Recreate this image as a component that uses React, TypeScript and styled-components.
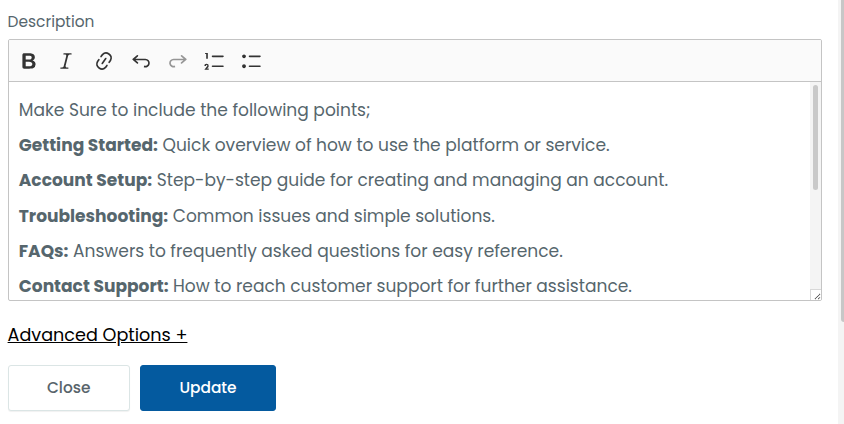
import React from 'react';
import styled, { createGlobalStyle } from 'styled-components';

const GlobalStyle = createGlobalStyle`
  *, *::before, *::after { box-sizing: border-box; }
  html, body { margin: 0; height: 100%; overflow: hidden; background: #fff; }
  #root { height: 100%; }
  body {
    font-family: Poppins, Inter, sans-serif;
    font-size: 17.6px;
    line-height: 26.4px;
    color: #56666d;
  }
`;

const Page = styled.div`
  display: flex;
  height: 424px;
  overflow: hidden;
`;

const Form = styled.main`
  flex: 1;
  display: flex;
  flex-direction: column;
  align-items: flex-start;
  padding: 9px 16px 0 7.6px;
`;

const PageScrollbar = styled.div`
  width: 6px;
  padding-left: 3px;
  background: #f4f4f4;
`;

const PageThumb = styled.div`
  height: 322px;
  background: #c7c7c7;
  border-bottom-left-radius: 3px;
`;

const Label = styled.label`
  height: 30px;
  font-size: 15.4px;
  line-height: 25px;
`;

const Editor = styled.section`
  width: 814px;
  height: 262px;
  margin-left: 0.4px;
  display: flex;
  flex-direction: column;
  border: 1px solid #c4c4c4;
  border-radius: 2px;
  overflow: hidden;
`;

const Toolbar = styled.div`
  display: flex;
  align-items: center;
  gap: 7.2px;
  height: 42px;
  flex: none;
  padding: 1px 5px 0 5.15px;
  background: #fafafa;
  border-bottom: 1px solid #c4c4c4;
`;

const ToolButton = styled.button`
  display: flex;
  align-items: center;
  justify-content: center;
  width: 30px;
  height: 32px;
  padding: 0;
  border: 0;
  background: none;
  color: #333;

  &:disabled { opacity: 0.5; }
`;

const Glyph = styled.svg<{ $mirrored?: boolean }>`
  width: 22px;
  height: 22px;
  flex: none;
  fill: currentColor;
  transform: ${p => (p.$mirrored ? 'scaleX(-1)' : 'none')};
`;

const EditorBody = styled.div`
  flex: 1;
  min-height: 0;
  display: flex;
`;

const Content = styled.div`
  flex: 1;
  padding: 15px 0 0 9.8px;
  font-size: 17.065px;
  overflow: hidden;
`;

const Line = styled.p`
  margin: 0 0 8.8px;
  white-space: nowrap;

  strong { font-weight: 700; }
`;

const ScrollColumn = styled.div`
  width: 11px;
  display: flex;
  flex-direction: column;
  align-items: center;
  padding-top: 3px;
  background: #f4f4f4;
`;

const ScrollThumb = styled.div`
  width: 5px;
  height: 105px;
  border-radius: 3px;
  background: #c9c9c9;
`;

const ResizeCorner = styled.div`
  width: 11px;
  height: 11px;
  margin-top: auto;
  border: solid #d8d8d8;
  border-width: 1px 0 0 1px;
  background: #fff;

  svg { display: block; width: 10px; height: 10px; }
`;

const AdvancedLink = styled.a`
  margin-top: 21px;
  color: #000;
  text-decoration: underline;
`;

const Actions = styled.div`
  display: flex;
  gap: 10px;
  margin: 16.6px 0 0 0.4px;
`;

const ActionButton = styled.button<{ $primary?: boolean }>`
  width: ${p => (p.$primary ? 136 : 122)}px;
  height: 46px;
  padding: ${p => (p.$primary ? '0 0 1px' : '0 0.6px 1px 0')};
  border: 1px solid ${p => (p.$primary ? '#045a9f' : '#dbe5e5')};
  border-radius: 3px;
  background: ${p => (p.$primary ? '#045a9f' : '#fff')};
  color: ${p => (p.$primary ? '#fff' : '#58646b')};
  box-shadow: ${p => (p.$primary ? 'none' : '0 1px 1px rgba(0, 0, 0, 0.06)')};
  font: 500 15.4px/24px Poppins, Inter, sans-serif;
`;

const UNDO =
  'm5.042 9.367 2.189 1.837a.75.75 0 0 1-.965 1.149l-3.788-3.18a.747.747 0 0 1-.21-.284.75.75 0 0 1 .17-.945L6.23 4.762a.75.75 0 1 1 .964 1.15L4.863 7.866h8.917A.75.75 0 0 1 14 7.9a4 4 0 1 1-1.477 7.718l.344-1.489a2.5 2.5 0 1 0 1.094-4.73l.008-.032H5.042z';

const tools = [
  {
    name: 'Bold',
    path: 'M10.187 17H5.773c-.637 0-1.092-.138-1.364-.415-.273-.277-.409-.718-.409-1.323V4.738c0-.617.14-1.062.419-1.332.279-.27.73-.406 1.354-.406h4.68c.69 0 1.288.041 1.793.124.506.083.96.242 1.36.478.341.197.644.447.906.75a3.262 3.262 0 0 1 .808 2.162c0 1.401-.722 2.426-2.167 3.075C15.05 10.175 16 11.315 16 13.01a3.756 3.756 0 0 1-2.296 3.504 6.1 6.1 0 0 1-1.517.377c-.571.073-1.238.11-2 .11zm-.217-6.217H7v4.087h3.069c1.977 0 2.965-.69 2.965-2.072 0-.707-.256-1.22-.768-1.537-.512-.319-1.277-.478-2.296-.478zM7 5.13v3.619h2.606c.729 0 1.292-.067 1.69-.2a1.6 1.6 0 0 0 .91-.765c.165-.267.247-.566.247-.897 0-.707-.26-1.176-.778-1.409-.519-.232-1.31-.348-2.375-.348H7z',
  },
  {
    name: 'Italic',
    path: 'm9.586 14.633.021.004c-.036.335.095.655.393.962.082.083.173.15.274.201h1.474a.6.6 0 1 1 0 1.2H5.304a.6.6 0 0 1 0-1.2h1.15c.474-.07.809-.182 1.005-.334.157-.122.291-.32.404-.597l2.416-9.55a1.053 1.053 0 0 0-.281-.823 1.12 1.12 0 0 0-.442-.296H8.15a.6.6 0 0 1 0-1.2h6.443a.6.6 0 1 1 0 1.2h-1.195c-.376.056-.65.155-.823.296-.215.175-.423.439-.623.79l-2.366 9.347z',
  },
  {
    name: 'Link',
    path: 'm11.077 15 .991-1.416a.75.75 0 1 1 1.229.86l-1.148 1.64a.748.748 0 0 1-.217.206 5.251 5.251 0 0 1-8.503-5.955.741.741 0 0 1 .12-.274l1.147-1.639a.75.75 0 1 1 1.228.86L4.933 10.7l.006.003a3.75 3.75 0 0 0 6.132 4.294l.006.004zm5.494-5.335a.748.748 0 0 1-.12.274l-1.147 1.639a.75.75 0 1 1-1.228-.86l.86-1.23a3.75 3.75 0 0 0-6.144-4.301l-.86 1.229a.75.75 0 0 1-1.229-.86l1.148-1.64a.748.748 0 0 1 .217-.206 5.251 5.251 0 0 1 8.503 5.955zm-4.563-2.532a.75.75 0 0 1 .184 1.045l-3.155 4.505a.75.75 0 1 1-1.229-.86l3.155-4.506a.75.75 0 0 1 1.045-.184z',
  },
  { name: 'Undo', path: UNDO },
  { name: 'Redo', path: UNDO, mirrored: true, disabled: true },
  {
    name: 'Numbered List',
    path: 'M7 5.75c0 .414.336.75.75.75h9.5a.75.75 0 1 0 0-1.5h-9.5a.75.75 0 0 0-.75.75zM3.5 3v5H2V3.7H1v-1h2.5V3zM.343 17.857l2.59-3.257H2.92a.6.6 0 1 0-1.04 0H.302a2 2 0 1 1 3.995 0h-.001c-.048.405-.16.734-.333.988-.175.254-.59.692-1.244 1.312H4.3v1h-4l.043-.043zM7 14.75a.75.75 0 0 1 .75-.75h9.5a.75.75 0 1 1 0 1.5h-9.5a.75.75 0 0 1-.75-.75z',
  },
  {
    name: 'Bulleted List',
    path: 'M7 5.75c0 .414.336.75.75.75h9.5a.75.75 0 1 0 0-1.5h-9.5a.75.75 0 0 0-.75.75zm-6 0C1 4.784 1.777 4 2.75 4c.966 0 1.75.777 1.75 1.75 0 .966-.777 1.75-1.75 1.75C1.784 7.5 1 6.723 1 5.75zm6 9c0 .414.336.75.75.75h9.5a.75.75 0 1 0 0-1.5h-9.5a.75.75 0 0 0-.75.75zm-6 0c0-.966.777-1.75 1.75-1.75.966 0 1.75.777 1.75 1.75 0 .966-.777 1.75-1.75 1.75-.966 0-1.75-.777-1.75-1.75z',
  },
];

const points = [
  { lead: 'Getting Started:', copy: 'Quick overview of how to use the platform or service.' },
  { lead: 'Account Setup:', copy: 'Step-by-step guide for creating and managing an account.' },
  { lead: 'Troubleshooting:', copy: 'Common issues and simple solutions.' },
  { lead: 'FAQs:', copy: 'Answers to frequently asked questions for easy reference.' },
  { lead: 'Contact Support:', copy: 'How to reach customer support for further assistance.' },
];

export default function App() {
  return (
    <>
      <GlobalStyle />
      <Page>
        <Form>
          <Label>Description</Label>
          <Editor>
            <Toolbar>
              {tools.map(tool => (
                <ToolButton key={tool.name} aria-label={tool.name} disabled={tool.disabled}>
                  <Glyph viewBox="0 0 20 20" $mirrored={tool.mirrored}>
                    <path d={tool.path} />
                  </Glyph>
                </ToolButton>
              ))}
            </Toolbar>
            <EditorBody>
              <Content>
                <Line>Make Sure to include the following points;</Line>
                {points.map(p => (
                  <Line key={p.lead}>
                    <strong>{p.lead}</strong> {p.copy}
                  </Line>
                ))}
              </Content>
              <ScrollColumn>
                <ScrollThumb />
                <ResizeCorner>
                  <svg viewBox="0 0 10 10" stroke="#555" strokeWidth="1.1" strokeDasharray="1.1 0.4">
                    <path d="M4 9 9 4M7.3 9 9 7.3" />
                  </svg>
                </ResizeCorner>
              </ScrollColumn>
            </EditorBody>
          </Editor>
          <AdvancedLink>Advanced Options +</AdvancedLink>
          <Actions>
            <ActionButton>Close</ActionButton>
            <ActionButton $primary>Update</ActionButton>
          </Actions>
        </Form>
        <PageScrollbar>
          <PageThumb />
        </PageScrollbar>
      </Page>
    </>
  );
}
